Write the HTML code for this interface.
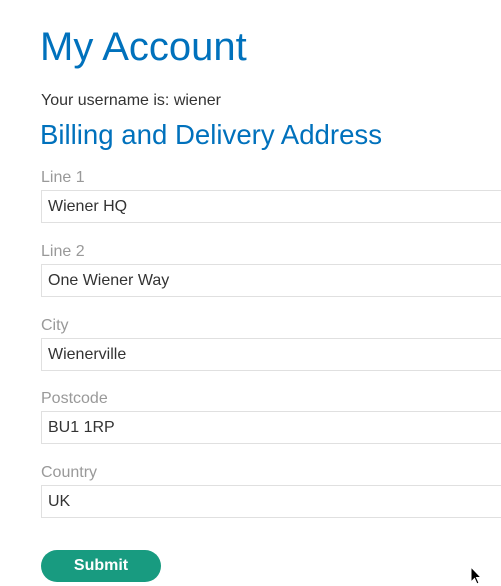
<!DOCTYPE html>
<html><head><style>
body{margin:0;background:#fff;font-family:"Liberation Sans",sans-serif;color:#333;width:501px;height:586px;overflow:hidden;position:relative}
.a{position:absolute;left:41px;white-space:nowrap}
h1{position:absolute;left:40px;top:23px;margin:0;font-size:40px;font-weight:normal;color:#0071bc;line-height:48px}
h2{position:absolute;left:40px;top:118px;margin:0;font-size:27.6px;font-weight:normal;color:#0071bc;line-height:34px}
.l{font-size:16px;color:#999}
.i{position:absolute;left:41px;width:480px;border:1px solid #e0e0e0;box-sizing:border-box;height:33px;font-size:16px;color:#333;padding-left:6px;line-height:31px}
.b{position:absolute;left:41px;top:550px;width:120px;height:32px;border-radius:16px;background:#189b80;color:#fff;font-weight:bold;font-size:16px;text-align:center;line-height:32px}
</style></head><body>
<h1>My Account</h1>
<div class="a" style="top:92px;font-size:16px">Your username is: wiener</div>
<h2>Billing and Delivery Address</h2>
<div class="a l" style="top:169px">Line 1</div><div class="i" style="top:190px">Wiener HQ</div>
<div class="a l" style="top:243px">Line 2</div><div class="i" style="top:264px">One Wiener Way</div>
<div class="a l" style="top:317px">City</div><div class="i" style="top:338px">Wienerville</div>
<div class="a l" style="top:390px">Postcode</div><div class="i" style="top:411px">BU1 1RP</div>
<div class="a l" style="top:464px">Country</div><div class="i" style="top:485px">UK</div>
<div class="b">Submit</div>
<svg style="position:absolute;left:470px;top:566px" width="12" height="20"><path d="M1 1 L1 16 L4.5 12.5 L7 18 L9 17 L6.5 11.5 L11 11.5 Z" fill="#000" stroke="#fff" stroke-width="1"/></svg>
</body></html>
